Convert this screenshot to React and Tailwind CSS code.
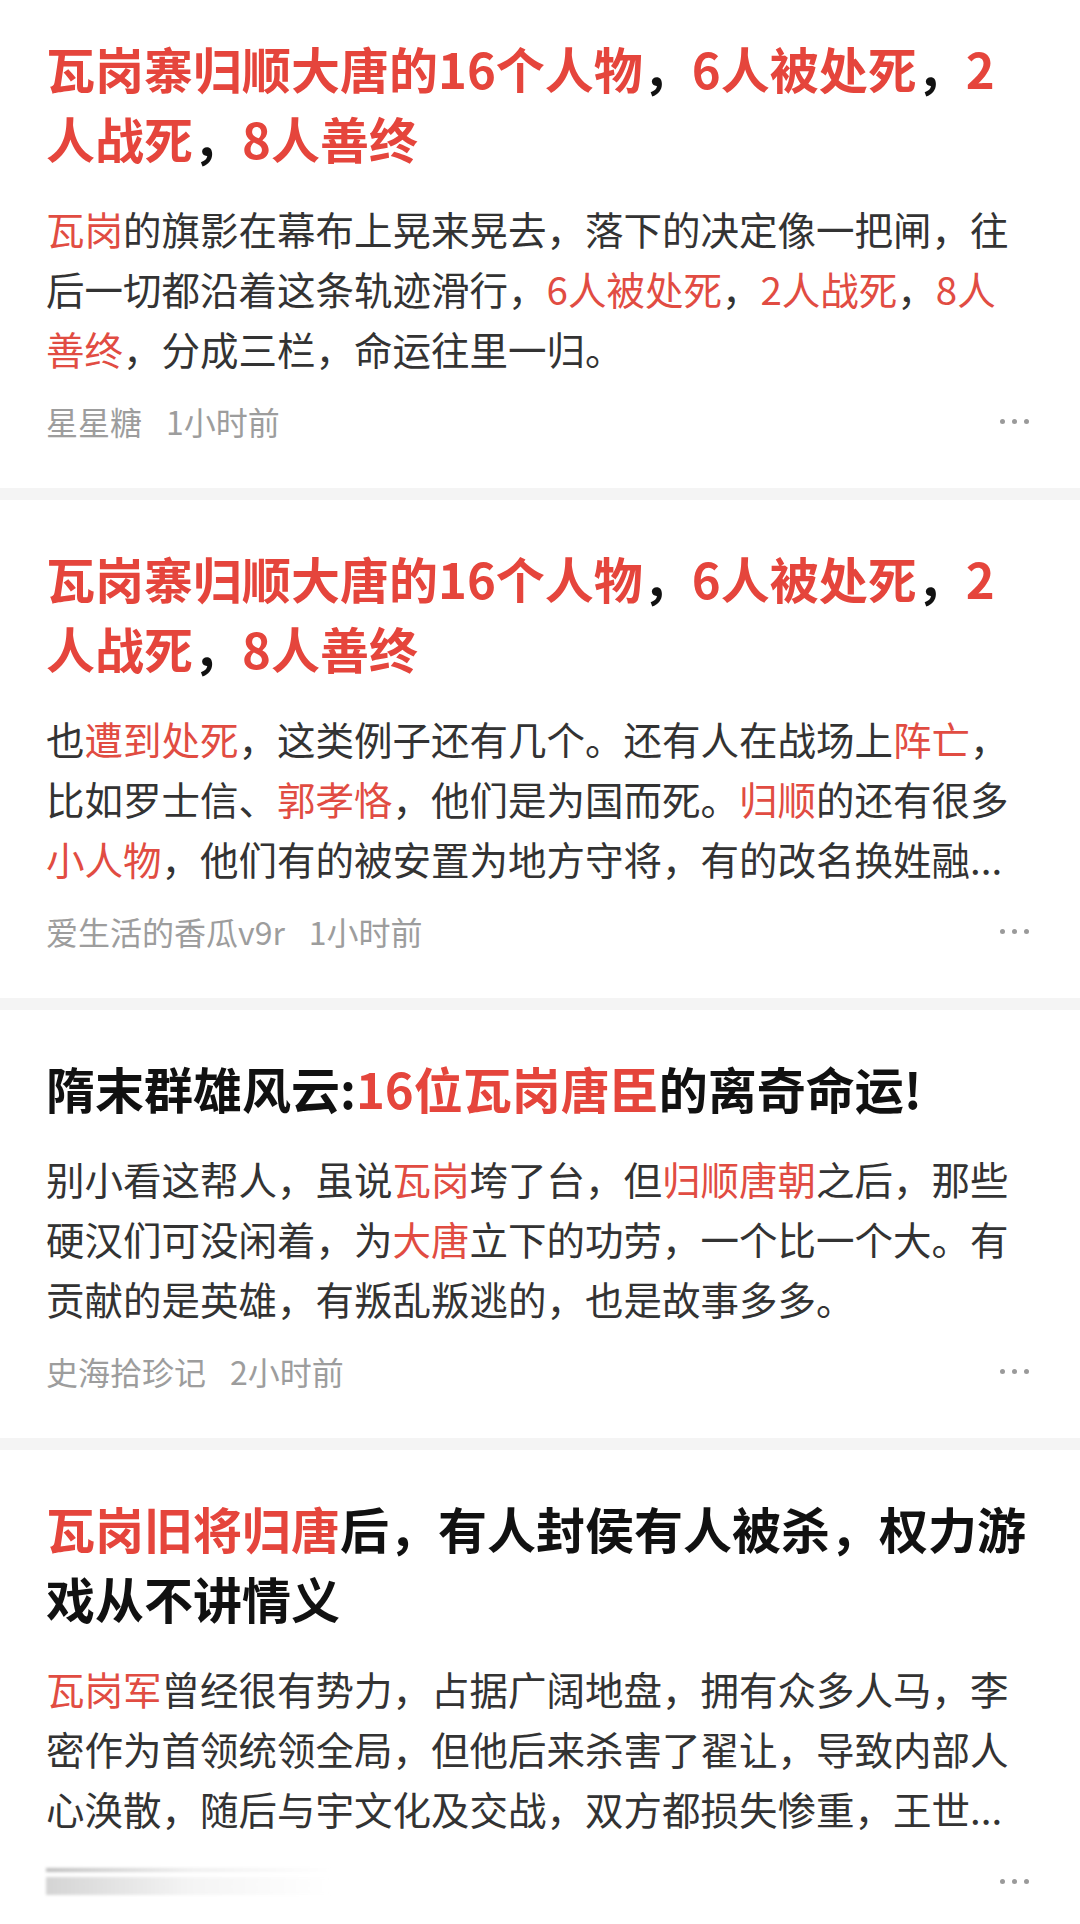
import React from 'react';

const RED_TITLE = 'text-[#e5453c]';
const RED_BODY = 'text-[#e14c42]';

const items = [
  {
    first: true,
    title: [
      [['瓦岗寨归顺大唐的16个人物', 1], ['，'], ['6人被处死', 1], ['，'], ['2', 1]],
      [['人战死', 1], ['，'], ['8人善终', 1]],
    ],
    body: [
      [['瓦岗', 1], ['的旗影在幕布上晃来晃去，落下的决定像一把闸，往']],
      [['后一切都沿着这条轨迹滑行，'], ['6人被处死', 1], ['，'], ['2人战死', 1], ['，'], ['8人', 1]],
      [['善终', 1], ['，分成三栏，命运往里一归。']],
    ],
    author: '星星糖',
    time: '1小时前',
  },
  {
    title: [
      [['瓦岗寨归顺大唐的16个人物', 1], ['，'], ['6人被处死', 1], ['，'], ['2', 1]],
      [['人战死', 1], ['，'], ['8人善终', 1]],
    ],
    body: [
      [['也'], ['遭到处死', 1], ['，这类例子还有几个。还有人在战场上'], ['阵亡', 1], ['，']],
      [['比如罗士信、'], ['郭孝恪', 1], ['，他们是为国而死。'], ['归顺', 1], ['的还有很多']],
      [['小人物', 1], ['，他们有的被安置为地方守将，有的改名换姓融...']],
    ],
    author: '爱生活的香瓜v9r',
    time: '1小时前',
  },
  {
    title: [
      [['隋末群雄风云:'], ['16位瓦岗唐臣', 1], ['的离奇命运!']],
    ],
    body: [
      [['别小看这帮人，虽说'], ['瓦岗', 1], ['垮了台，但'], ['归顺唐朝', 1], ['之后，那些']],
      [['硬汉们可没闲着，为'], ['大唐', 1], ['立下的功劳，一个比一个大。有']],
      [['贡献的是英雄，有叛乱叛逃的，也是故事多多。']],
    ],
    author: '史海拾珍记',
    time: '2小时前',
  },
  {
    title: [
      [['瓦岗旧将归唐', 1], ['后，有人封侯有人被杀，权力游']],
      [['戏从不讲情义']],
    ],
    body: [
      [['瓦岗军', 1], ['曾经很有势力，占据广阔地盘，拥有众多人马，李']],
      [['密作为首领统领全局，但他后来杀害了翟让，导致内部人']],
      [['心涣散，随后与宇文化及交战，双方都损失惨重，王世...']],
    ],
    blurred: true,
  },
];

function Line({ segs, red }) {
  return (
    <div className="whitespace-nowrap">
      {segs.map(([text, hl], i) => (
        <span key={i} className={hl ? red : ''}>
          {text}
        </span>
      ))}
    </div>
  );
}

function Dots() {
  return (
    <div className="flex items-center gap-[7px] mr-[5px]">
      <span className="w-[5px] h-[5px] rounded-full bg-[#9a9a9a]" />
      <span className="w-[5px] h-[5px] rounded-full bg-[#9a9a9a]" />
      <span className="w-[5px] h-[5px] rounded-full bg-[#9a9a9a]" />
    </div>
  );
}

function Card({ item }) {
  return (
    <div className={`bg-white px-[46px] pb-[46px] ${item.first ? 'pt-[33px]' : 'pt-[43px]'}`}>
      {/* titulo */}
      <div className="text-[49px] leading-[70px] font-bold text-[#111111] mb-[25px]">
        {item.title.map((l, i) => (
          <Line key={i} segs={l} red={RED_TITLE} />
        ))}
      </div>

      {/* resumo */}
      <div className="text-[38.5px] leading-[60px] text-[#333333] mb-[22px]">
        {item.body.map((l, i) => (
          <Line key={i} segs={l} red={RED_BODY} />
        ))}
      </div>

      <div className="flex items-center justify-between h-[42px]">
        {item.blurred ? (
          <div className="flex flex-col gap-[5px] w-[285px] blur-[1.5px]">
            <div className="h-[4px] bg-gradient-to-r from-[#bdbdbd] via-[#eeeeee] to-white" />
            <div className="h-[18px] bg-gradient-to-r from-[#d4d4d4] via-[#f4f4f4] to-white" />
          </div>
        ) : (
          <div className="text-[32px] leading-[42px] text-[#9d9d9d] whitespace-nowrap">
            <span>{item.author}</span>
            <span className="ml-[24px]">{item.time}</span>
          </div>
        )}
        <Dots />
      </div>
    </div>
  );
}

export default function App() {
  return (
    <div
      className="w-[1080px] h-[1924px] overflow-hidden bg-white"
      style={{ fontFamily: '"Noto Sans CJK SC", "Noto Sans", sans-serif' }}
    >
      {items.map((item, i) => (
        <div key={i}>
          {i > 0 && <div className="h-[12px] bg-[#f4f4f4]" />}
          <Card item={item} />
        </div>
      ))}
    </div>
  );
}
